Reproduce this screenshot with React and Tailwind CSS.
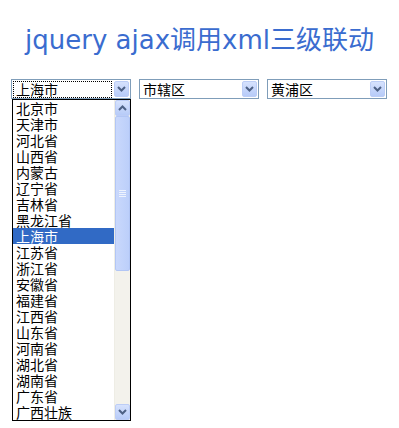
import React from "react";

const provinces = [
  "北京市", "天津市", "河北省", "山西省", "内蒙古", "辽宁省", "吉林省", "黑龙江省",
  "上海市", "江苏省", "浙江省", "安徽省", "福建省", "江西省", "山东省", "河南省",
  "湖北省", "湖南省", "广东省", "广西壮族",
];

const cjk = { fontFamily: '"Noto Sans CJK SC", "DejaVu Sans", sans-serif' };

const Chevron = ({ up }) => (
  <svg width="9" height="6" viewBox="0 0 9 6" className={up ? "rotate-180" : ""}>
    <path d="M1 1 L4.5 4.5 L8 1" fill="none" stroke="#4d6185" strokeWidth="2" />
  </svg>
);

const ArrowBtn = ({ up }) => (
  <div className="w-[15px] h-[16px] flex items-center justify-center rounded-[2px] border border-[#bccdf6] bg-gradient-to-b from-[#d6e2fd] to-[#b7cbf8]">
    <Chevron up={up} />
  </div>
);

const Select = ({ value, focused }) => (
  <div className="w-[120px] h-[20px] border border-[#7f9db9] bg-white flex items-center justify-between pl-[1px] pr-[1px]">
    <div className={`h-[17px] w-[99px] flex items-center pl-[2px] text-[14px] leading-[16px] text-black ${focused ? 'border border-dotted border-black' : ''}`} style={cjk}>
      {value}
    </div>
    <ArrowBtn />
  </div>
);

export default function App() {
  return (
    <div className="w-[399px] h-[428px] bg-white relative overflow-hidden">
      <h1 className="pt-[26px] text-center text-[26px] leading-[28px] text-[#3a6ccf]" style={{ fontFamily: '"DejaVu Sans", "Noto Sans CJK SC", sans-serif' }}>
        jquery ajax调用xml三级联动
      </h1>

      <div className="flex gap-[8px] pl-[11px] mt-[25px]">
        <Select value="上海市" focused />
        <Select value="市辖区" />
        <Select value="黄浦区" />
      </div>

      {/* open dropdown list */}
      <div className="absolute left-[12px] top-[99px] w-[119px] h-[322px] border border-black bg-white flex">
        <div className="flex-1 flex flex-col" style={cjk}>
          {provinces.map((p) => (
            <div key={p} className={`h-[16px] leading-[16px] text-[14px] pl-[3px] ${p === "上海市" ? 'bg-[#316ac5] text-white' : 'text-black'}`}>
              {p}
            </div>
          ))}
        </div>
        <div className="w-[16px] flex flex-col bg-[#f3f2ec] border-l border-[#eeede5]">
          <ArrowBtn up />
          <div className="h-[155px] rounded-[2px] border border-[#b2c6f5] bg-gradient-to-r from-[#c9d8fc] to-[#bccffa] flex flex-col items-center justify-center gap-[1px]">
            <div className="w-[7px] h-[1px] bg-[#eef3fe]" />
            <div className="w-[7px] h-[1px] bg-[#eef3fe]" />
            <div className="w-[7px] h-[1px] bg-[#eef3fe]" />
            <div className="w-[7px] h-[1px] bg-[#eef3fe]" />
          </div>
          <div className="flex-1" />
          <ArrowBtn />
        </div>
      </div>
    </div>
  );
}
